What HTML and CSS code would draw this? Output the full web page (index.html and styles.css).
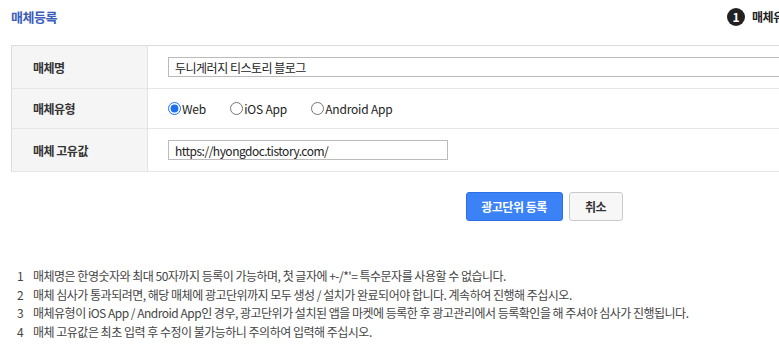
FILE: index.html
```html
<!DOCTYPE html>
<html>
    <head>
        <meta charset="utf-8">
        <link rel="stylesheet" href="styles.css">
        <title>매체등록</title>
    </head>
    <body>
        <div class="wrap">
            <div class="head">
                <h1 class="title">매체등록</h1>
                <div class="steps">
                    <span class="step-num">1</span>
                    <span class="step-name">매체유형</span>
                </div>
            </div>

            <form>
                <table class="form-table">
                    <tr>
                        <th>매체명</th>
                        <td><input type="text" class="text-in wide" value="두니게러지 티스토리 블로그"></td>
                    </tr>
                    <tr>
                        <th>매체유형</th>
                        <td>
                            <label class="radio"><input type="radio" name="type" value="web" checked>Web</label>
                            <label class="radio"><input type="radio" name="type" value="ios">iOS App</label>
                            <label class="radio"><input type="radio" name="type" value="android">Android App</label>
                        </td>
                    </tr>
                    <tr>
                        <th>매체 고유값</th>
                        <td><input type="text" class="text-in" value="https://hyongdoc.tistory.com/"></td>
                    </tr>
                </table>

                <div class="buttons">
                    <button type="button" class="btn btn-blue">광고단위 등록</button>
                    <button type="button" class="btn btn-gray">취소</button>
                </div>
            </form>

            <ul class="notes">
                <li><span class="num">1</span>매체명은 한영숫자와 최대 50자까지 등록이 가능하며, 첫 글자에 +-/*'= 특수문자를 사용할 수 없습니다.</li>
                <li><span class="num">2</span>매체 심사가 통과되려면, 해당 매체에 광고단위까지 모두 생성 / 설치가 완료되어야 합니다. 계속하여 진행해 주십시오.</li>
                <li><span class="num">3</span>매체유형이 iOS App / Android App인 경우, 광고단위가 설치된 앱을 마켓에 등록한 후 광고관리에서 등록확인을 해 주셔야 심사가 진행됩니다.</li>
                <li><span class="num">4</span>매체 고유값은 최초 입력 후 수정이 불가능하니 주의하여 입력해 주십시오.</li>
            </ul>
        </div>
    </body>
</html>
```

FILE: styles.css
```css
html, body {
    margin: 0;
    overflow: hidden;
    background: #fff;
}
body {
    font-family: "Noto Sans CJK KR", "Noto Sans", sans-serif;
    font-size: 12px;
    color: #333;
    letter-spacing: -0.5px;
}
.wrap {
    width: 1066px;
    padding: 0 0 0 11px;
}
.head {
    display: grid;
    grid-template-columns: 716px 1fr;
    align-items: center;
    height: 33px;
    margin-bottom: 12px;
}
.title {
    margin: 0;
    font-size: 13px;
    font-weight: bold;
    color: #3a5dba;
}
.steps {
    display: flex;
    align-items: center;
    gap: 7px;
    white-space: nowrap;
}
.step-num {
    width: 18px;
    height: 18px;
    border-radius: 50%;
    background: #222;
    color: #fff;
    font-size: 12px;
    font-weight: bold;
    line-height: 18px;
    text-align: center;
    letter-spacing: 0;
}
.step-name {
    font-weight: bold;
    color: #222;
}

.form-table {
    width: 100%;
    border-collapse: collapse;
    border: 1px solid #dcdcdc;
}
.form-table th {
    width: 114px;
    padding: 0 0 0 21px;
    background: #f5f5f5;
    border-right: 1px solid #e3e3e3;
    text-align: left;
    font-weight: bold;
    color: #333;
    vertical-align: middle;
}
.form-table tr {
    height: 43px;
    border-bottom: 1px solid #e6e6e6;
}
.form-table tr:nth-child(2) {
    height: 40px;
}
.form-table td {
    padding: 0 0 0 20px;
}
.text-in {
    box-sizing: border-box;
    width: 280px;
    height: 20px;
    padding: 0 6px;
    border: 1px solid #bbb;
    font-family: inherit;
    font-size: 12px;
    letter-spacing: -0.5px;
    color: #222;
    outline: none;
}
.text-in.wide {
    width: 900px;
}
.radio {
    display: inline-flex;
    align-items: center;
    margin-right: 22px;
    color: #222;
    letter-spacing: -0.2px;
}
.radio input {
    width: 13px;
    height: 13px;
    margin: 0 1px 0 0;
    accent-color: #1f6ff0;
}

.buttons {
    display: flex;
    justify-content: center;
    gap: 6px;
    margin-top: 20px;
}
.btn {
    height: 29px;
    padding: 0;
    border-radius: 3px;
    font-family: inherit;
    font-size: 12px;
    font-weight: bold;
    letter-spacing: -0.5px;
    white-space: nowrap;
}
.btn-blue {
    width: 97px;
    background: #3b82f6;
    border: 1px solid #2d6fe6;
    color: #fff;
}
.btn-gray {
    width: 54px;
    background: #f7f7f7;
    border: 1px solid #cacaca;
    color: #333;
}

.notes {
    list-style: none;
    margin: 46px 0 0 0;
    padding: 0 0 0 6px;
    color: #444;
}
.notes li {
    line-height: 18.5px;
    white-space: nowrap;
}
.notes .num {
    display: inline-block;
    width: 16px;
}
```
